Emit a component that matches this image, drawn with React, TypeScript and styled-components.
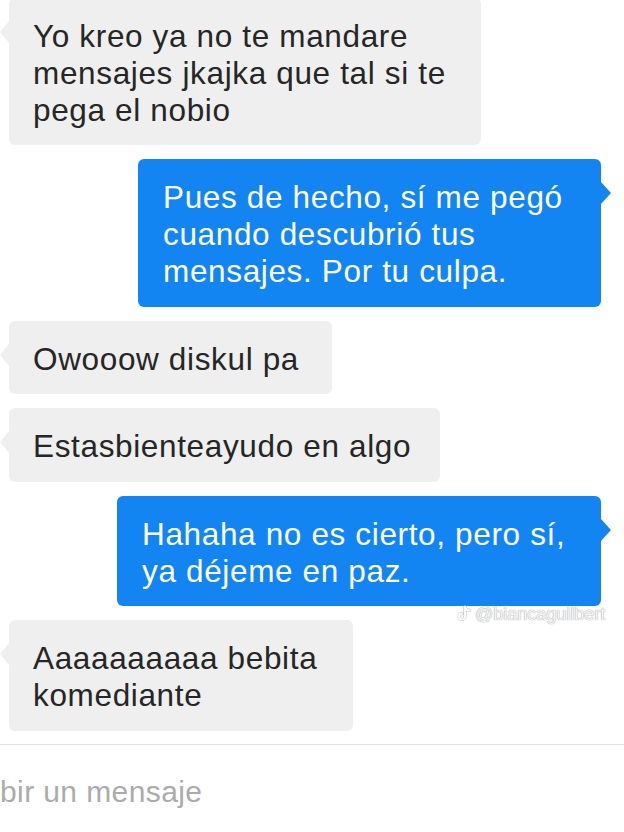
import React from "react";
import styled, { createGlobalStyle } from "styled-components";

const GlobalStyle = createGlobalStyle`
  html, body {
    margin: 0;
    padding: 0;
    background: #ffffff;
  }
  body {
    font-family: "Liberation Sans", Arial, sans-serif;
    overflow: hidden;
  }
`;

const Screen = styled.div`
  position: relative;
  width: 624px;
  height: 832px;
  background: #ffffff;
  overflow: hidden;
  display: flex;
  flex-direction: column;
`;

const Thread = styled.div`
  display: flex;
  flex-direction: column;
  gap: 14px;
  margin-top: -2.5px;
  padding-bottom: 13px;
`;

const Row = styled.div<{ $mine?: boolean }>`
  display: flex;
  justify-content: ${(p) => (p.$mine ? "flex-end" : "flex-start")};
  padding: ${(p) => (p.$mine ? "0 23px 0 0" : "0 0 0 9px")};
`;

const Bubble = styled.div<{ $mine?: boolean; $w: number }>`
  position: relative;
  box-sizing: border-box;
  width: ${(p) => p.$w}px;
  padding: 20px 0 16.5px ${(p) => (p.$mine ? 25 : 24)}px;
  border-radius: 6px;
  background: ${(p) => (p.$mine ? "#1285f3" : "#efefef")};
  color: ${(p) => (p.$mine ? "#ffffff" : "#262626")};
  font-size: 31.5px;
  line-height: 37px;
  letter-spacing: 0.65px;
  white-space: nowrap;

  &::before {
    content: "";
    position: absolute;
    top: 23px;
    ${(p) => (p.$mine ? "right: -10px;" : "left: -9px;")}
    width: 0;
    height: 0;
    border-top: 11px solid transparent;
    border-bottom: 11px solid transparent;
    ${(p) =>
      p.$mine
        ? "border-left: 10px solid #1285f3;"
        : "border-right: 9px solid #efefef;"}
  }
`;

const Watermark = styled.div`
  position: absolute;
  top: 604px;
  left: 457px;
  display: flex;
  align-items: center;
  gap: 3px;
  font-size: 18px;
  line-height: 20px;
  color: rgba(255, 255, 255, 0.92);
  text-shadow: 0 0 1px rgba(110, 110, 110, 0.6), 0 0 1px rgba(110, 110, 110, 0.5);
  pointer-events: none;
`;

const Composer = styled.div`
  border-top: 1px solid #e2e2e2;
  height: 88px;
  display: flex;
  align-items: center;
`;

const Placeholder = styled.span`
  font-size: 30px;
  letter-spacing: 0.4px;
  color: #ababab;
  margin-top: 8px;
`;

function TikTokNote() {
  return (
    <svg width="15" height="18" viewBox="0 0 15 18" fill="none">
      <path
        d="M8 1.5v10a3 3 0 1 1-3-3M8 1.5c.4 2.3 2.1 3.8 4.8 4"
        stroke="rgba(130,130,130,0.5)"
        strokeWidth="3"
        strokeLinecap="round"
      />
      <path
        d="M8 1.5v10a3 3 0 1 1-3-3M8 1.5c.4 2.3 2.1 3.8 4.8 4"
        stroke="#ffffff"
        strokeWidth="2"
        strokeLinecap="round"
      />
    </svg>
  );
}

type Msg = { mine?: boolean; w: number; lines: string[] };

const messages: Msg[] = [
  {
    w: 472,
    lines: [
      "Yo kreo ya no te mandare",
      "mensajes jkajka que tal si te",
      "pega el nobio",
    ],
  },
  {
    mine: true,
    w: 463,
    lines: [
      "Pues de hecho, sí me pegó",
      "cuando descubrió tus",
      "mensajes. Por tu culpa.",
    ],
  },
  { w: 323, lines: ["Owooow diskul pa"] },
  { w: 431, lines: ["Estasbienteayudo en algo"] },
  {
    mine: true,
    w: 484,
    lines: ["Hahaha no es cierto, pero sí,", "ya déjeme en paz."],
  },
  { w: 344, lines: ["Aaaaaaaaaa bebita", "komediante"] },
];

export default function App() {
  return (
    <Screen>
      <GlobalStyle />
      <Thread>
        {messages.map((m, i) => (
          <Row key={i} $mine={m.mine}>
            <Bubble $mine={m.mine} $w={m.w}>
              {m.lines.map((l, j) => (
                <div key={j}>{l}</div>
              ))}
            </Bubble>
          </Row>
        ))}
      </Thread>
      <Composer>
        <Placeholder>bir un mensaje</Placeholder>
      </Composer>
      <Watermark>
        <TikTokNote />
        <span>@biancaguilbert</span>
      </Watermark>
    </Screen>
  );
}
